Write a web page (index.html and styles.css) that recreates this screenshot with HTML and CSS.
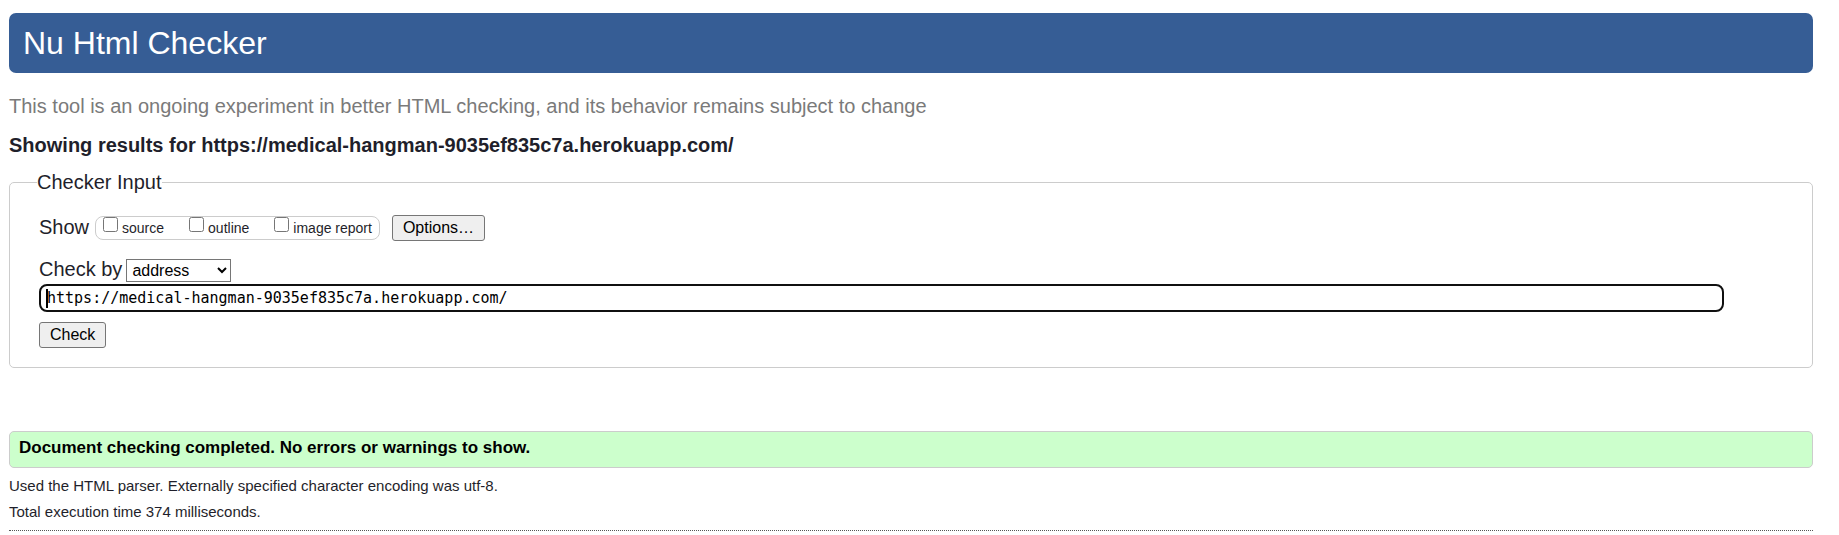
FILE: index.html
```html
<!DOCTYPE html>
<html lang="en">
<head>
<meta charset="utf-8">
<title>Nu Html Checker</title>
<link rel="stylesheet" href="styles.css">
</head>
<body>
<header class="banner"><h1 class="banner-title">Nu Html Checker</h1></header>
<p class="tagline">This tool is an ongoing experiment in better HTML checking, and its behavior remains subject to change</p>
<h2 class="results-title">Showing results for https://medical-hangman-9035ef835c7a.herokuapp.com/</h2>
<form>
<fieldset class="checker">
<legend class="checker-legend">Checker Input</legend>
<div class="show-row">
<span class="row-label">Show</span>
<div class="checks">
<label class="check"><input class="box" type="checkbox">source</label>
<label class="check"><input class="box" type="checkbox">outline</label>
<label class="check"><input class="box" type="checkbox">image report</label>
</div>
<button class="button" type="button">Options…</button>
</div>
<div class="by-row">
<label class="row-label" for="method">Check by</label>
<select class="method" id="method"><option>address</option><option>file upload</option><option>text input</option></select>
</div>
<div class="address-wrap">
<input class="address" type="url" aria-label="Address" value="https://medical-hangman-9035ef835c7a.herokuapp.com/">
</div>
<button class="button" type="submit">Check</button>
</fieldset>
</form>
<main>
<p class="success">Document checking completed. No errors or warnings to show.</p>
<p class="detail">Used the HTML parser. Externally specified character encoding was utf-8.</p>
<p class="detail">Total execution time 374 milliseconds.</p>
</main>
<hr class="rule">
</body>
</html>
```

FILE: styles.css
```css
* { box-sizing: border-box; }

body {
  margin: 0;
  padding: 13px 26px 0 9px;
  background: #fff;
  color: #1f1f2b;
  font-family: "Liberation Sans", Arial, sans-serif;
  font-size: 20px;
  line-height: 24px;
}

.banner {
  padding: 12px 14px;
  border-radius: 7px;
  background: #365d95;
  color: #fff;
}

.banner-title {
  margin: 0;
  font-size: 32px;
  font-weight: 400;
  line-height: 36px;
}

.tagline { margin: 21px 0 0; color: #7a7a7a; }

.results-title {
  margin: 15px 0 13px;
  font-size: 20px;
  line-height: 24px;
}

.checker {
  margin: 0;
  padding: 21px 29px 19px;
  border: 1px solid #ccc;
  border-radius: 5px;
}

.checker-legend { margin-left: -2px; padding: 0; }

.show-row { display: flex; align-items: center; }

.row-label { line-height: 22px; padding-bottom: 2px; }

.checks {
  display: flex;
  gap: 25px;
  height: 24px;
  margin: 0 12px 0 6px;
  padding: 0 7px;
  border: 1px solid #ccc;
  border-radius: 8px;
}

.check {
  display: flex;
  align-items: flex-start;
  gap: 4px;
  font-size: 14px;
  line-height: 22px;
}

.box { width: 15px; height: 15px; margin: 0; }

.button {
  height: 26px;
  padding: 0 10px;
  border: 1px solid #767676;
  border-radius: 3px;
  background: #efefef;
  color: #000;
  font: 16px/24px "Liberation Sans", Arial, sans-serif;
}

.by-row {
  display: flex;
  align-items: center;
  gap: 4px;
  margin: 17px 0 2px;
}

.method {
  width: 105px;
  height: 23px;
  padding: 0 1px;
  border: 1px solid #767676;
  border-radius: 0;
  background: #fff;
  color: #000;
  font: 16px "Liberation Sans", Arial, sans-serif;
}

.address-wrap {
  position: relative;
  display: flex;
  margin: 0 59px 9px 0;
}

/* Insertion caret at the start of the address */
.address-wrap::before {
  content: "";
  position: absolute;
  top: 5px;
  left: 7px;
  width: 2px;
  height: 19px;
  background: #000;
}

.address {
  flex: 1;
  height: 28px;
  padding: 0 6px;
  border: 2px solid #101010;
  border-radius: 8px;
  background: #fff;
  color: #000;
  font: 15px "DejaVu Sans Mono", monospace;
}

.success {
  margin: 63px 0 6px;
  padding: 4px 9px 7px;
  border: 1px solid #ccc;
  border-radius: 5px;
  background: #cfc;
  color: #000;
  font-size: 17px;
  font-weight: 700;
}

.detail {
  margin: 0 0 2px;
  font-size: 15px;
}

.rule {
  margin: 6px 0 0;
  border: 0;
  border-top: 1px dotted #555;
}
```
